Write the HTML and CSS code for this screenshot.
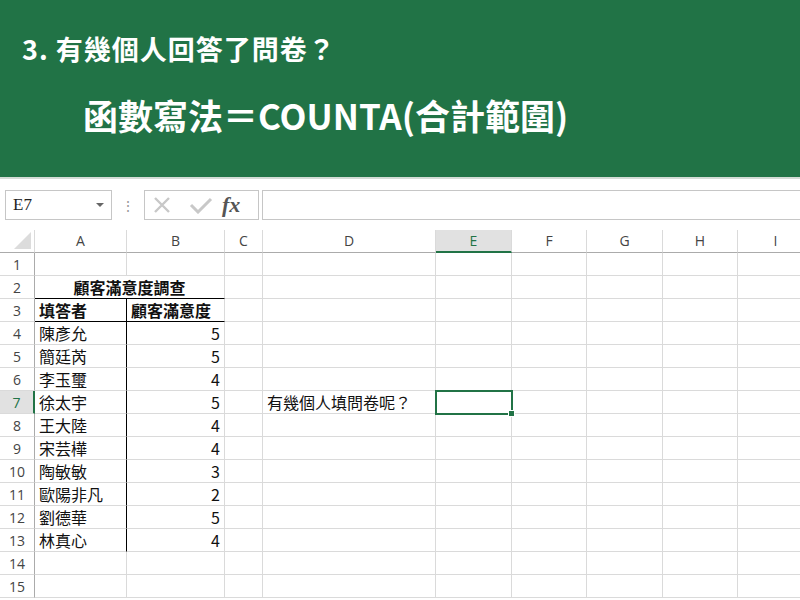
FILE: index.html
```html
<!DOCTYPE html>
<html lang="zh-Hant">
<head>
  <meta charset="UTF-8">
  <meta name="viewport" content="width=device-width, initial-scale=1.0">
  <title>COUNTA</title>
  <link rel="stylesheet" href="styles.css">
</head>
<body>

  <header class="banner">
    <h1 class="banner-q">3. 有幾個人回答了問卷？</h1>
    <p class="banner-f">函數寫法＝COUNTA(合計範圍)</p>
  </header>

  <div class="fbar">
    <div class="namebox">
      <span class="namebox-ref">E7</span>
      <span class="namebox-arrow"></span>
    </div>
    <div class="fbar-grip">⋮</div>
    <div class="fbar-btns">
      <svg class="ico" width="22" height="18" viewBox="0 0 22 18"><path d="M3 2 L17 16 M17 2 L3 16" stroke="#c8c8c8" stroke-width="2.4" fill="none"/></svg>
      <svg class="ico" width="24" height="18" viewBox="0 0 24 18"><path d="M2 9 L9 16 L22 3" stroke="#c8c8c8" stroke-width="3" fill="none"/></svg>
      <span class="fx">fx</span>
    </div>
    <div class="fbar-input"></div>
  </div>

  <div class="sheet" id="sheet"></div>

  <script>
    const cols = ["A", "B", "C", "D", "E", "F", "G", "H", "I"];
    const names = ["陳彥允", "簡廷芮", "李玉璽", "徐太宇", "王大陸", "宋芸樺", "陶敏敏", "歐陽非凡", "劉德華", "林真心"];
    const scores = [5, 5, 4, 5, 4, 4, 3, 2, 5, 4];
    const sheet = document.getElementById("sheet");

    function cell(cls, text) {
      const el = document.createElement("div");
      el.className = cls;
      if (text !== undefined) el.textContent = text;
      sheet.appendChild(el);
      return el;
    }

    // column header row
    cell("corner");
    cols.forEach(c => cell(c === "E" ? "colhead active" : "colhead", c));

    for (let r = 1; r <= 15; r++) {
      cell(r === 7 ? "rowhead active" : "rowhead", r);

      if (r === 2) {
        cell("c title span2", "顧客滿意度調查");
      } else if (r === 3) {
        cell("c head bb br", "填答者");
        cell("c head bb", "顧客滿意度");
      } else if (r >= 4 && r <= 13) {
        cell("c br", names[r - 4]);
        cell("c num", scores[r - 4]);
      } else {
        cell("c");
        cell("c");
      }

      cell("c");
      cell("c", r === 7 ? "有幾個人填問卷呢？" : "");
      cell(r === 7 ? "c sel" : "c");
      cell("c");
      cell("c");
      cell("c");
      cell("c");
    }
  </script>

</body>
</html>
```

FILE: styles.css
```css
body {
  margin: 0;
  width: 800px;
  height: 600px;
  overflow: hidden;
  background: #fff;
  font-family: "Noto Sans CJK TC", sans-serif;
}

.banner {
  background: #217346;
  color: #fff;
  height: 179px;
  border-bottom: 2px solid #d4dcd6;
  box-sizing: border-box;
  padding: 29px 0 0 22px;
}
.banner-q {
  margin: 0;
  font-size: 27px;
  font-weight: 700;
  line-height: 40px;
  letter-spacing: 1px;
}
.banner-f {
  margin: 23px 0 0 61px;
  font-size: 35px;
  font-weight: 700;
  line-height: 46px;
}

.fbar {
  display: flex;
  align-items: center;
  height: 30px;
  margin-top: 11px;
  padding-left: 5px;
}
.namebox {
  width: 107px;
  height: 30px;
  box-sizing: border-box;
  border: 1px solid #c6c6c6;
  display: flex;
  align-items: center;
  justify-content: space-between;
  padding: 0 7px 0 7px;
}
.namebox-ref {
  font-family: "Liberation Serif", serif;
  font-size: 17px;
  color: #222;
}
.namebox-arrow {
  width: 0;
  height: 0;
  border-left: 4px solid transparent;
  border-right: 4px solid transparent;
  border-top: 4px solid #666;
}
.fbar-grip {
  width: 32px;
  text-align: center;
  color: #999;
  font-size: 14px;
}
.fbar-btns {
  width: 115px;
  height: 30px;
  box-sizing: border-box;
  border: 1px solid #c6c6c6;
  display: flex;
  align-items: center;
  gap: 15px;
  padding-left: 7px;
}
.fx {
  font-family: "Liberation Serif", serif;
  font-style: italic;
  font-weight: 700;
  font-size: 22px;
  color: #555;
  margin-left: -6px;
  line-height: 1;
}
.fbar-input {
  flex: 1;
  height: 30px;
  margin-left: 3px;
  box-sizing: border-box;
  border: 1px solid #c6c6c6;
  border-right: none;
}

.sheet {
  display: grid;
  grid-template-columns: 35px 92px 98px 38px 173px 76px 75px 76px 75px 76px;
  grid-template-rows: 23px;
  grid-auto-rows: 23px;
  margin-top: 10px;
}
.sheet > div {
  box-sizing: border-box;
  border-right: 1px solid #dadada;
  border-bottom: 1px solid #dadada;
  white-space: nowrap;
  overflow: visible;
}

.corner {
  position: relative;
  border-bottom: 1px solid #ababab !important;
}
.corner::after {
  content: "";
  position: absolute;
  right: 3px;
  bottom: 3px;
  border-left: 17px solid transparent;
  border-bottom: 17px solid #dcdcdc;
}
.colhead {
  border-bottom: 1px solid #ababab !important;
  font-family: "Open Sans", sans-serif;
  font-size: 14px;
  color: #444;
  text-align: center;
  line-height: 22px;
}
.colhead.active {
  background: #e1e1e1;
  color: #217346;
  border-bottom: 2px solid #217346 !important;
}
.rowhead {
  font-family: "Open Sans", sans-serif;
  font-size: 14px;
  color: #444;
  text-align: center;
  line-height: 23px;
  border-right: 1px solid #ababab !important;
}
.rowhead.active {
  background: #e1e1e1;
  color: #217346;
  border-right: 2px solid #217346 !important;
}

.c {
  font-size: 16px;
  color: #111;
  line-height: 22px;
  padding-left: 4px;
}
.span2 {
  grid-column: span 2;
}
.title {
  text-align: center;
  font-weight: 700;
  padding-left: 0;
  border-bottom: 1px solid #000 !important;
}
.head {
  font-weight: 700;
}
.bb {
  border-bottom: 1px solid #000 !important;
}
.br {
  border-right: 1px solid #000 !important;
}
.num {
  text-align: right;
  padding: 0 4px 0 0;
}

.sel {
  position: relative;
  outline: 2px solid #217346;
  outline-offset: -1px;
  z-index: 1;
}
.sel::after {
  content: "";
  position: absolute;
  right: -4px;
  bottom: -4px;
  width: 5px;
  height: 5px;
  background: #217346;
  border: 1px solid #fff;
}
```
